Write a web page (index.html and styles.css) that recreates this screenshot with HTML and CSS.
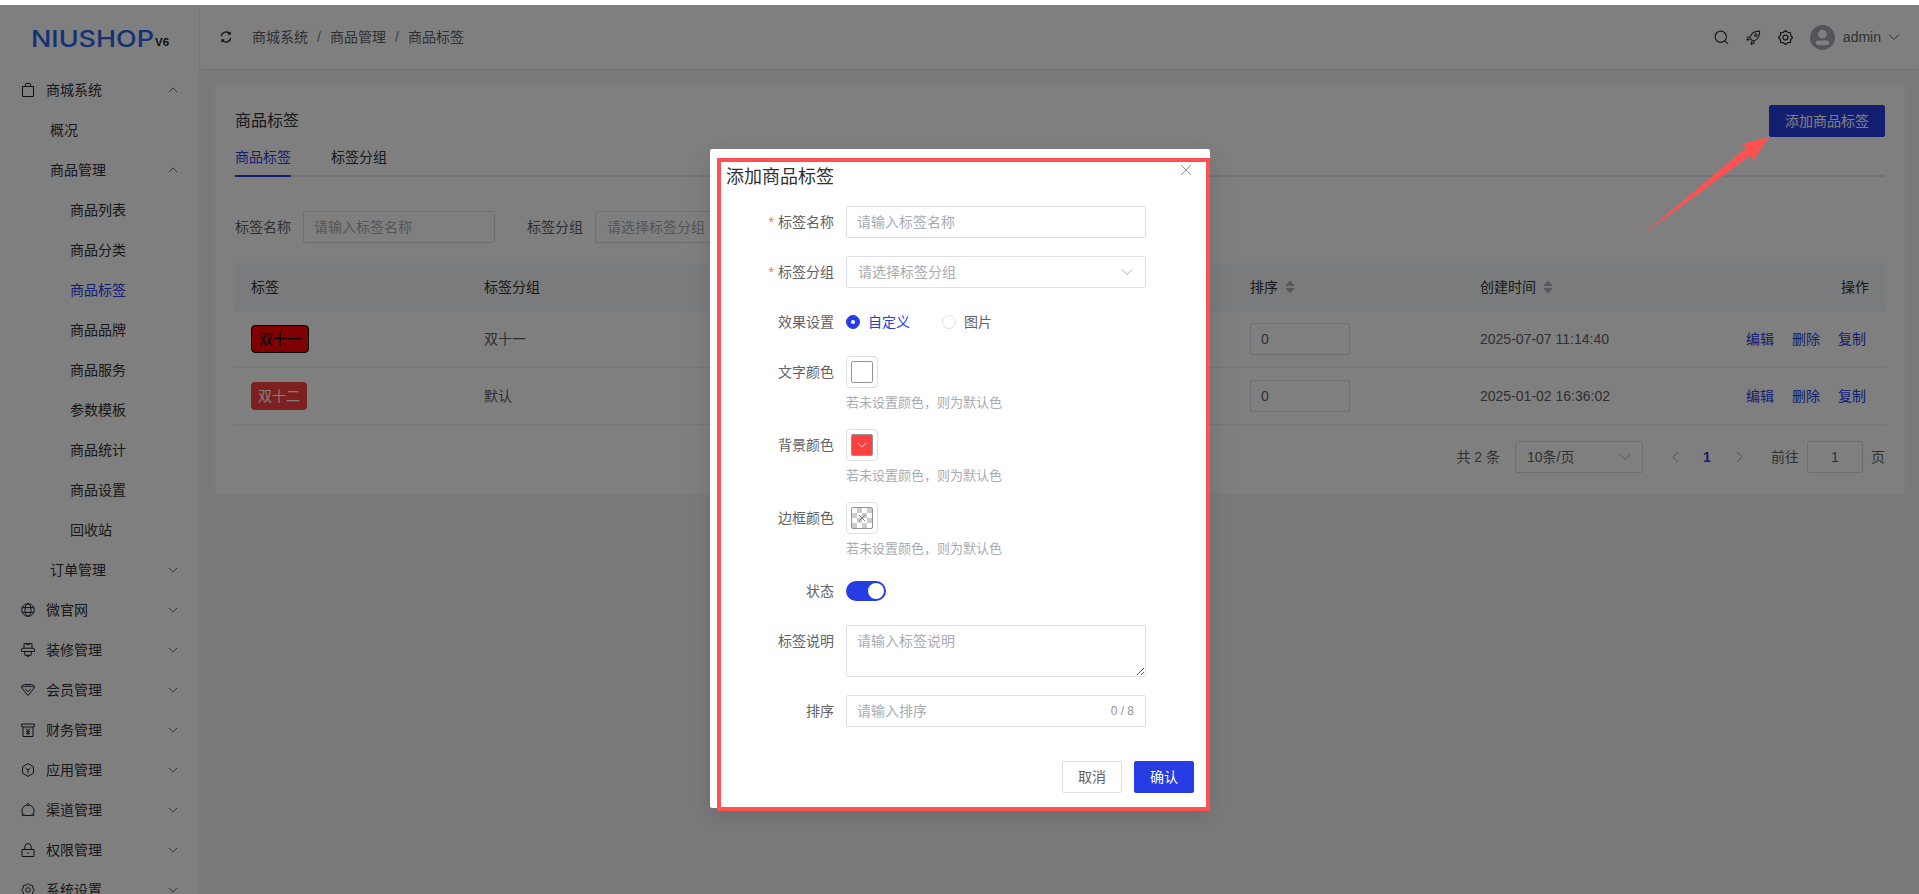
FILE: index.html
```html
<!DOCTYPE html>
<html lang="zh-CN">
<head>
<meta charset="utf-8">
<title>商品标签</title>
<link rel="stylesheet" href="styles.css">
</head>
<body>
<svg class="sprite" aria-hidden="true">
  <symbol id="down" viewBox="0 0 12 12"><path d="M1 3.500l5 5 5-5"/></symbol>
  <symbol id="up" viewBox="0 0 12 12"><path d="M1 8.500l5-5 5 5"/></symbol>
  <symbol id="bag" viewBox="0 0 14 14"><path d="M1.500 3.500h11v10h-11zM4.500 3.500V1.200c0-.4.2-.7.7-.7h3.600c.5 0 .7.3.7.7v2.300"/></symbol>
  <symbol id="globe" viewBox="0 0 14 14"><circle cx="7" cy="7" r="6.300"/><ellipse cx="7" cy="7" rx="3" ry="6.300"/><path d="M1 4.600h12M1 9.400h12"/></symbol>
  <symbol id="shop" viewBox="0 0 14 14"><path d="M3 .7h8v4.500H3zM5 .7l2 1.500L9 .7M3 5.200H2A1.500 1.500 0 0 0 .5 6.700v1.800h13V6.700A1.500 1.500 0 0 0 12 5.200h-1M3.500 8.500l.5 3.800h6l.5-3.800M6 12.300v1h2v-1"/></symbol>
  <symbol id="gem" viewBox="0 0 14 14"><path d="M3.500 1.500h7c2 0 3 1.200 3 3L7 12.500.5 4.500c0-1.800 1-3 3-3zM.8 4C3 3 11 3 13.200 4M4.300 6L7 8.500 9.700 6"/></symbol>
  <symbol id="fin" viewBox="0 0 14 14"><path d="M.5 1h13l-.5 3H1zM2 4v9.500h10V4M5 5.500l2 2 2-2M7 7.500v4.500M5 8.300h4M5 10.200h4"/></symbol>
  <symbol id="hex" viewBox="0 0 14 14"><path d="M7 .6l5.500 3.200v6.400L7 13.400 1.500 10.200V3.800zM4.300 4.800L7 7l2.700-2.200M7 7v3.600"/></symbol>
  <symbol id="ring" viewBox="0 0 14 14"><circle cx="7" cy="1.600" r="1.100"/><circle cx="2" cy="11.800" r="1"/><circle cx="12" cy="11.800" r="1"/><path d="M5.600 2.100A5.900 5.900 0 0 0 1.500 10.400M8.400 2.100a5.900 5.900 0 0 1 4.100 8.300M3.200 12.500h7.600"/></symbol>
  <symbol id="lock" viewBox="0 0 14 14"><path d="M1 6.500h12v7H1zM3.800 6.500V3.800a3.200 3.200 0 0 1 6.400 0v2.700M7 9.200v1.600"/></symbol>
  <symbol id="gear" viewBox="0 0 14 14"><path stroke-linejoin="round" d="M13.500 7L11.800 9l-.2 2.600L9 11.800 7 13.500 5 11.800l-2.600-.2L2.200 9 .5 7l1.700-2 .2-2.600L5 2.200 7 .5l2 1.700 2.600.2.200 2.600z"/><circle cx="7" cy="7" r="2.300"/></symbol>
</svg>

<div class="strip"></div>
<div class="app">
  <aside class="side">
    <div class="logo"><span class="logo-main">NIUSHOP</span><span class="logo-ver">V6</span></div>
    <nav class="menu">
      <div class="mi"><svg class="ic"><use href="#bag"/></svg><span>商城系统</span><svg class="ar"><use href="#up"/></svg></div>
      <div class="mi l2"><span>概况</span></div>
      <div class="mi l2"><span>商品管理</span><svg class="ar"><use href="#up"/></svg></div>
      <div class="mi l3"><span>商品列表</span></div>
      <div class="mi l3"><span>商品分类</span></div>
      <div class="mi l3 on"><span>商品标签</span></div>
      <div class="mi l3"><span>商品品牌</span></div>
      <div class="mi l3"><span>商品服务</span></div>
      <div class="mi l3"><span>参数模板</span></div>
      <div class="mi l3"><span>商品统计</span></div>
      <div class="mi l3"><span>商品设置</span></div>
      <div class="mi l3"><span>回收站</span></div>
      <div class="mi l2"><span>订单管理</span><svg class="ar"><use href="#down"/></svg></div>
      <div class="mi"><svg class="ic"><use href="#globe"/></svg><span>微官网</span><svg class="ar"><use href="#down"/></svg></div>
      <div class="mi"><svg class="ic"><use href="#shop"/></svg><span>装修管理</span><svg class="ar"><use href="#down"/></svg></div>
      <div class="mi"><svg class="ic"><use href="#gem"/></svg><span>会员管理</span><svg class="ar"><use href="#down"/></svg></div>
      <div class="mi"><svg class="ic"><use href="#fin"/></svg><span>财务管理</span><svg class="ar"><use href="#down"/></svg></div>
      <div class="mi"><svg class="ic"><use href="#hex"/></svg><span>应用管理</span><svg class="ar"><use href="#down"/></svg></div>
      <div class="mi"><svg class="ic"><use href="#ring"/></svg><span>渠道管理</span><svg class="ar"><use href="#down"/></svg></div>
      <div class="mi"><svg class="ic"><use href="#lock"/></svg><span>权限管理</span><svg class="ar"><use href="#down"/></svg></div>
      <div class="mi"><svg class="ic"><use href="#gear"/></svg><span>系统设置</span><svg class="ar"><use href="#down"/></svg></div>
    </nav>
  </aside>

  <div class="main">
    <header class="top">
      <svg class="refresh" viewBox="0 0 14 14"><path d="M1.500 6A5.600 5.600 0 0 1 11.500 3.300M12.500 8A5.600 5.600 0 0 1 2.500 10.700M11.800 .8v2.800H9M2.200 13.200v-2.800H5"/></svg>
      <div class="crumbs"><span>商城系统</span><i>/</i><span>商品管理</span><i>/</i><span>商品标签</span></div>
      <div class="tools">
        <svg class="tool" viewBox="0 0 16 16"><circle cx="7.200" cy="7.200" r="6"/><path d="M11.600 11.600L15 15"/></svg>
        <svg class="tool" viewBox="0 0 16 16"><path d="M6 10.500L4 8.200C5.500 3.500 9.500 1 14.500 1.200 14.800 6.500 12.500 10.500 7.800 12zM4.600 7.300L2 7.800 1 10.500l3.200-.2M8.700 11.500l-.4 2.700-2.700 1 .2-3.200"/><circle cx="10.500" cy="5.500" r="1.300"/></svg>
        <svg class="tool"><use href="#gear"/></svg>
        <div class="avatar"><svg viewBox="0 0 26 26"><circle cx="13" cy="9.500" r="4.500"/><rect x="6" y="16" width="14" height="5" rx="2.500"/></svg></div>
        <span class="uname">admin</span>
        <svg class="uarrow"><use href="#down"/></svg>
      </div>
    </header>

    <main class="page">
      <section class="card">
        <div class="card-head"><h1>商品标签</h1><button class="btn primary add">添加商品标签</button></div>
        <div class="tabs"><span class="tab on">商品标签</span><span class="tab">标签分组</span></div>
        <div class="filter">
          <label>标签名称</label><input class="ctl f-name" placeholder="请输入标签名称">
          <label class="lb2">标签分组</label><div class="ctl sel f-group"><span class="ph">请选择标签分组</span></div>
        </div>
        <div class="grid head">
          <div>标签</div><div>标签分组</div>
          <div>排序<svg class="caret" viewBox="0 0 10 14"><path d="M5 .5l5 5.500H0zM5 13.500L0 8h10z"/></svg></div>
          <div>创建时间<svg class="caret" viewBox="0 0 10 14"><path d="M5 .5l5 5.500H0zM5 13.500L0 8h10z"/></svg></div>
          <div class="tr">操作</div>
        </div>
        <div class="grid row">
          <div><span class="tag t1">双十一</span></div><div>双十一</div>
          <div><input class="ctl f-sort" value="0"></div><div>2025-07-07 11:14:40</div>
          <div class="acts"><a>编辑</a><a>删除</a><a>复制</a></div>
        </div>
        <div class="grid row">
          <div><span class="tag t2">双十二</span></div><div>默认</div>
          <div><input class="ctl f-sort" value="0"></div><div>2025-01-02 16:36:02</div>
          <div class="acts"><a>编辑</a><a>删除</a><a>复制</a></div>
        </div>
        <div class="pager">
          <span>共 2 条</span>
          <div class="ctl sel p-size"><span>10条/页</span><svg class="chev"><use href="#down"/></svg></div>
          <svg class="p-arrow" viewBox="0 0 32 12"><path d="M19 1l-5 5 5 5"/></svg>
          <b class="p-num">1</b>
          <svg class="p-arrow" viewBox="0 0 32 12"><path d="M14 1l5 5-5 5"/></svg>
          <span class="p-go">前往</span><input class="ctl p-input" value="1"><span>页</span>
        </div>
      </section>
    </main>
  </div>

  <div class="overlay"></div>

  <div class="dialog">
    <h2>添加商品标签</h2>
    <svg class="close" viewBox="0 0 12 12"><path d="M1 1l10 10M11 1L1 11"/></svg>
    <form class="form">
      <div class="fr"><label class="req">标签名称</label><input class="ctl w300" placeholder="请输入标签名称"></div>
      <div class="fr"><label class="req">标签分组</label><div class="ctl sel w300 dsel"><span class="ph">请选择标签分组</span><svg class="chev"><use href="#down"/></svg></div></div>
      <div class="fr mid"><label>效果设置</label>
        <span class="radio on"></span><span class="rtxt on">自定义</span>
        <span class="radio r2"></span><span class="rtxt">图片</span>
      </div>
      <div class="fr cr"><label>文字颜色</label><div><div class="pick"><span class="sw"></span></div><p class="hint">若未设置颜色，则为默认色</p></div></div>
      <div class="fr cr"><label>背景颜色</label><div><div class="pick"><span class="sw red"><svg class="swc"><use href="#down"/></svg></span></div><p class="hint">若未设置颜色，则为默认色</p></div></div>
      <div class="fr cr"><label>边框颜色</label><div><div class="pick"><span class="sw chk"><svg class="swx" viewBox="0 0 10 10"><path d="M2 2l6 6M8 2L2 8"/></svg></span></div><p class="hint">若未设置颜色，则为默认色</p></div></div>
      <div class="fr mid"><label>状态</label><span class="switch"></span></div>
      <div class="fr"><label class="lt">标签说明</label><textarea class="ctl w300 ta" placeholder="请输入标签说明"></textarea></div>
      <div class="fr"><label>排序</label><div class="ctl w300 cnt"><input placeholder="请输入排序"><span>0 / 8</span></div></div>
    </form>
    <div class="foot"><button class="btn" type="button">取消</button><button class="btn primary" type="button">确认</button></div>
  </div>

  <div class="mark"></div>
  <svg class="arrow" viewBox="0 0 130 102"><path d="M1 100L107 11 101 8 129 1 113 25 111 19z"/></svg>
</div>
</body>
</html>
```
FILE: styles.css
```css
*{box-sizing:border-box}
html,body{margin:0;height:894px;overflow:hidden;background:#fff}
body{font:14px/20px "Liberation Sans","Noto Sans CJK SC",sans-serif;color:#303133}
.sprite{display:none}
svg{fill:none;stroke:currentColor;stroke-width:1}
.strip{height:5px;background:#fff}
.app{position:relative;display:flex;height:889px;overflow:hidden}

.side{width:200px;flex:none;height:889px;overflow:hidden;background:#fff;border-right:1px solid #f0f2f5}
.logo{height:65px;display:flex;align-items:flex-end;padding:0 0 18px 31px;color:#2a62e8}
.logo-main{display:block;width:123px;font:500 23px/26px Inter,sans-serif;white-space:nowrap;transform:scaleX(1.17);transform-origin:left}
.logo-ver{font:700 11.500px/14px "Liberation Sans",sans-serif;color:#222;margin:0 0 3px 1px}
.menu{display:flex;flex-direction:column}
.mi{height:40px;flex:none;display:flex;align-items:center;position:relative;padding-left:46px;color:#303133}
.l2{padding-left:50px}
.l3{padding-left:70px}
.on{color:#273ce2}
.ic{position:absolute;left:21px;top:13px;width:14px;height:14px;color:#1f2430}
.ar{position:absolute;left:168px;top:15px;width:10px;height:10px;color:#444}

.main{flex:1;min-width:0;display:flex;flex-direction:column;background:#f5f5f5}
.top{height:64px;flex:none;display:flex;align-items:center;background:#fff;padding:0 19px 0 20px;box-shadow:0 1px 2px rgba(0,0,0,.05)}
.refresh{width:12px;height:12px;color:#222;margin-right:20px;stroke-width:1.400}
.crumbs{display:flex;color:#606266}
.crumbs i{font-style:normal;width:22px;text-align:center;color:#808080}
.tools{margin-left:auto;display:flex;align-items:center;color:#303133}
.tool{width:15px;height:15px;margin-right:17px;stroke-width:1.200}
.avatar{width:25px;height:25px;border-radius:50%;background:#a8abb2;margin:0 8px 0 0;display:flex}
.avatar svg{width:25px;height:25px;fill:#fff;stroke:none}
.uname{color:#606266}
.uarrow{width:12px;height:12px;margin-left:7px;color:#606266}

.page{flex:1;padding:16px 14px 0 15px}
.card{background:#fff;padding:20px;height:408px}
.card-head{display:flex;justify-content:space-between;align-items:center;height:32px}
h1{margin:0;font-size:16px;font-weight:400;color:#303133}
.btn{height:32px;width:60px;padding:0;font:14px/20px "Liberation Sans","Noto Sans CJK SC",sans-serif;color:#606266;background:#fff;border:1px solid #dcdfe6;border-radius:2px}
.primary{background:#273ce2;border-color:#273ce2;color:#fff}
.add{width:116px}
.tabs{display:flex;gap:40px;height:40px;border-bottom:2px solid #e4e7ed}
.tab{line-height:40px;height:40px;color:#303133}
.tab.on{color:#273ce2;border-bottom:2px solid #273ce2}
.filter{display:flex;align-items:center;margin-top:34px;color:#606266}
.filter label{margin-right:12px}
.filter .lb2{margin-left:32px}
.ctl{height:32px;border:1px solid #dcdfe6;border-radius:2px;background:#fff;font:14px/20px "Liberation Sans","Noto Sans CJK SC",sans-serif;color:#606266;outline:0}
input.ctl{padding:0 10px}
input::placeholder,textarea::placeholder,.ph{color:#a8abb2;opacity:1}
.f-name{width:192px}
.f-group{width:192px}
.sel{display:flex;align-items:center;justify-content:space-between;padding:0 11px}
.chev{width:12px;height:12px;color:#a8abb2;flex:none}

.grid{display:grid;grid-template-columns:233px 766px 230px 266px 155px;align-items:center;border-bottom:1px solid #ebeef5}
.grid>div{padding-left:16px}
.head{height:48px;margin-top:20px;background:#f5f7fa;color:#303133}
.row{height:57px;color:#606266}
.grid>.tr{text-align:right;padding-right:16px}
.caret{width:10px;height:14px;margin-left:7px;vertical-align:-2px;fill:#b0b0b0;stroke:none}
.tag{display:inline-flex;align-items:center;height:28px;padding:0 7px;border-radius:4px;vertical-align:middle}
.t1{background:#f00;color:#000;border:1px solid #000}
.t2{background:#ff4040;color:#fff}
.f-sort{width:100px;display:block}
.acts{display:flex;gap:18px;color:#273ce2}
.pager{display:flex;align-items:center;justify-content:flex-end;margin-top:16px;color:#606266}
.p-size{width:128px;margin:0 16px 0 15px}
.p-arrow{width:32px;height:12px;color:#a8abb2}
.p-num{width:32px;text-align:center;color:#273ce2}
.p-go{margin-left:16px}
.p-input{width:56px;margin:0 8px;text-align:center}

.overlay{position:absolute;inset:0;background:rgba(0,0,0,.5)}
.dialog{position:absolute;left:710px;top:144px;width:500px;height:659px;padding:14px 16px 0;background:#fff;border-radius:2px;box-shadow:0 12px 32px 4px rgba(0,0,0,.04),0 8px 20px rgba(0,0,0,.08)}
h2{margin:0;font-size:18px;font-weight:400;line-height:28px;color:#303133}
.close{position:absolute;left:470px;top:15px;width:12px;height:12px;color:#909399}
.form{margin-top:15px;color:#606266}
.fr{display:flex;margin-bottom:18px}
.fr>label{width:108px;margin-right:12px;flex:none;text-align:right;line-height:32px}
.req::before{content:"*";color:#f56c6c;margin-right:4px}
.w300{width:300px}
.ta{height:52px;padding:5px 10px;display:block;resize:vertical}
.dsel{padding-right:12px}
.mid{align-items:center;height:32px}
.radio{width:14px;height:14px;border-radius:50%;border:1px solid #dcdfe6;background:#fff}
.radio.on{background:#273ce2;border-color:#273ce2;position:relative}
.radio.on::after{content:"";position:absolute;left:4px;top:4px;width:4px;height:4px;border-radius:50%;background:#fff}
.rtxt{margin-left:8px}
.rtxt.on{color:#273ce2}
.r2{margin-left:32px}
.pick{width:32px;height:32px;border:1px solid #dcdfe6;border-radius:4px;padding:4px}
.sw{display:flex;align-items:center;justify-content:center;width:22px;height:22px;border:1px solid #909399;border-radius:2px;background:#fff}
.red{background:#ff4040}
.swc{width:10px;height:10px;color:#fff}
.chk{background:conic-gradient(#ccc 25%,#fff 0 50%,#ccc 0 75%,#fff 0) 0 0/10px 10px}
.swx{width:10px;height:10px;color:#777}
.hint{margin:7px 0 0;font-size:13px;line-height:16px;color:#a8abb2}
.switch{width:40px;height:20px;border-radius:10px;background:#273ce2;position:relative}
.switch::after{content:"";position:absolute;right:2px;top:2px;width:16px;height:16px;border-radius:50%;background:#fff}
.cnt{display:flex;align-items:center;padding:0 11px 0 10px}
.cnt input{flex:1;min-width:0;border:0;padding:0;outline:0;font:inherit}
.cnt span{font-size:12px;color:#909399}
.foot{display:flex;justify-content:flex-end;gap:12px;margin-top:34px}

.mark{position:absolute;left:717px;top:153px;width:493px;height:653px;border:4px solid #fe5252}
.arrow{position:absolute;left:1640px;top:131px;width:130px;height:102px;fill:#fe5252;stroke:none}
```
